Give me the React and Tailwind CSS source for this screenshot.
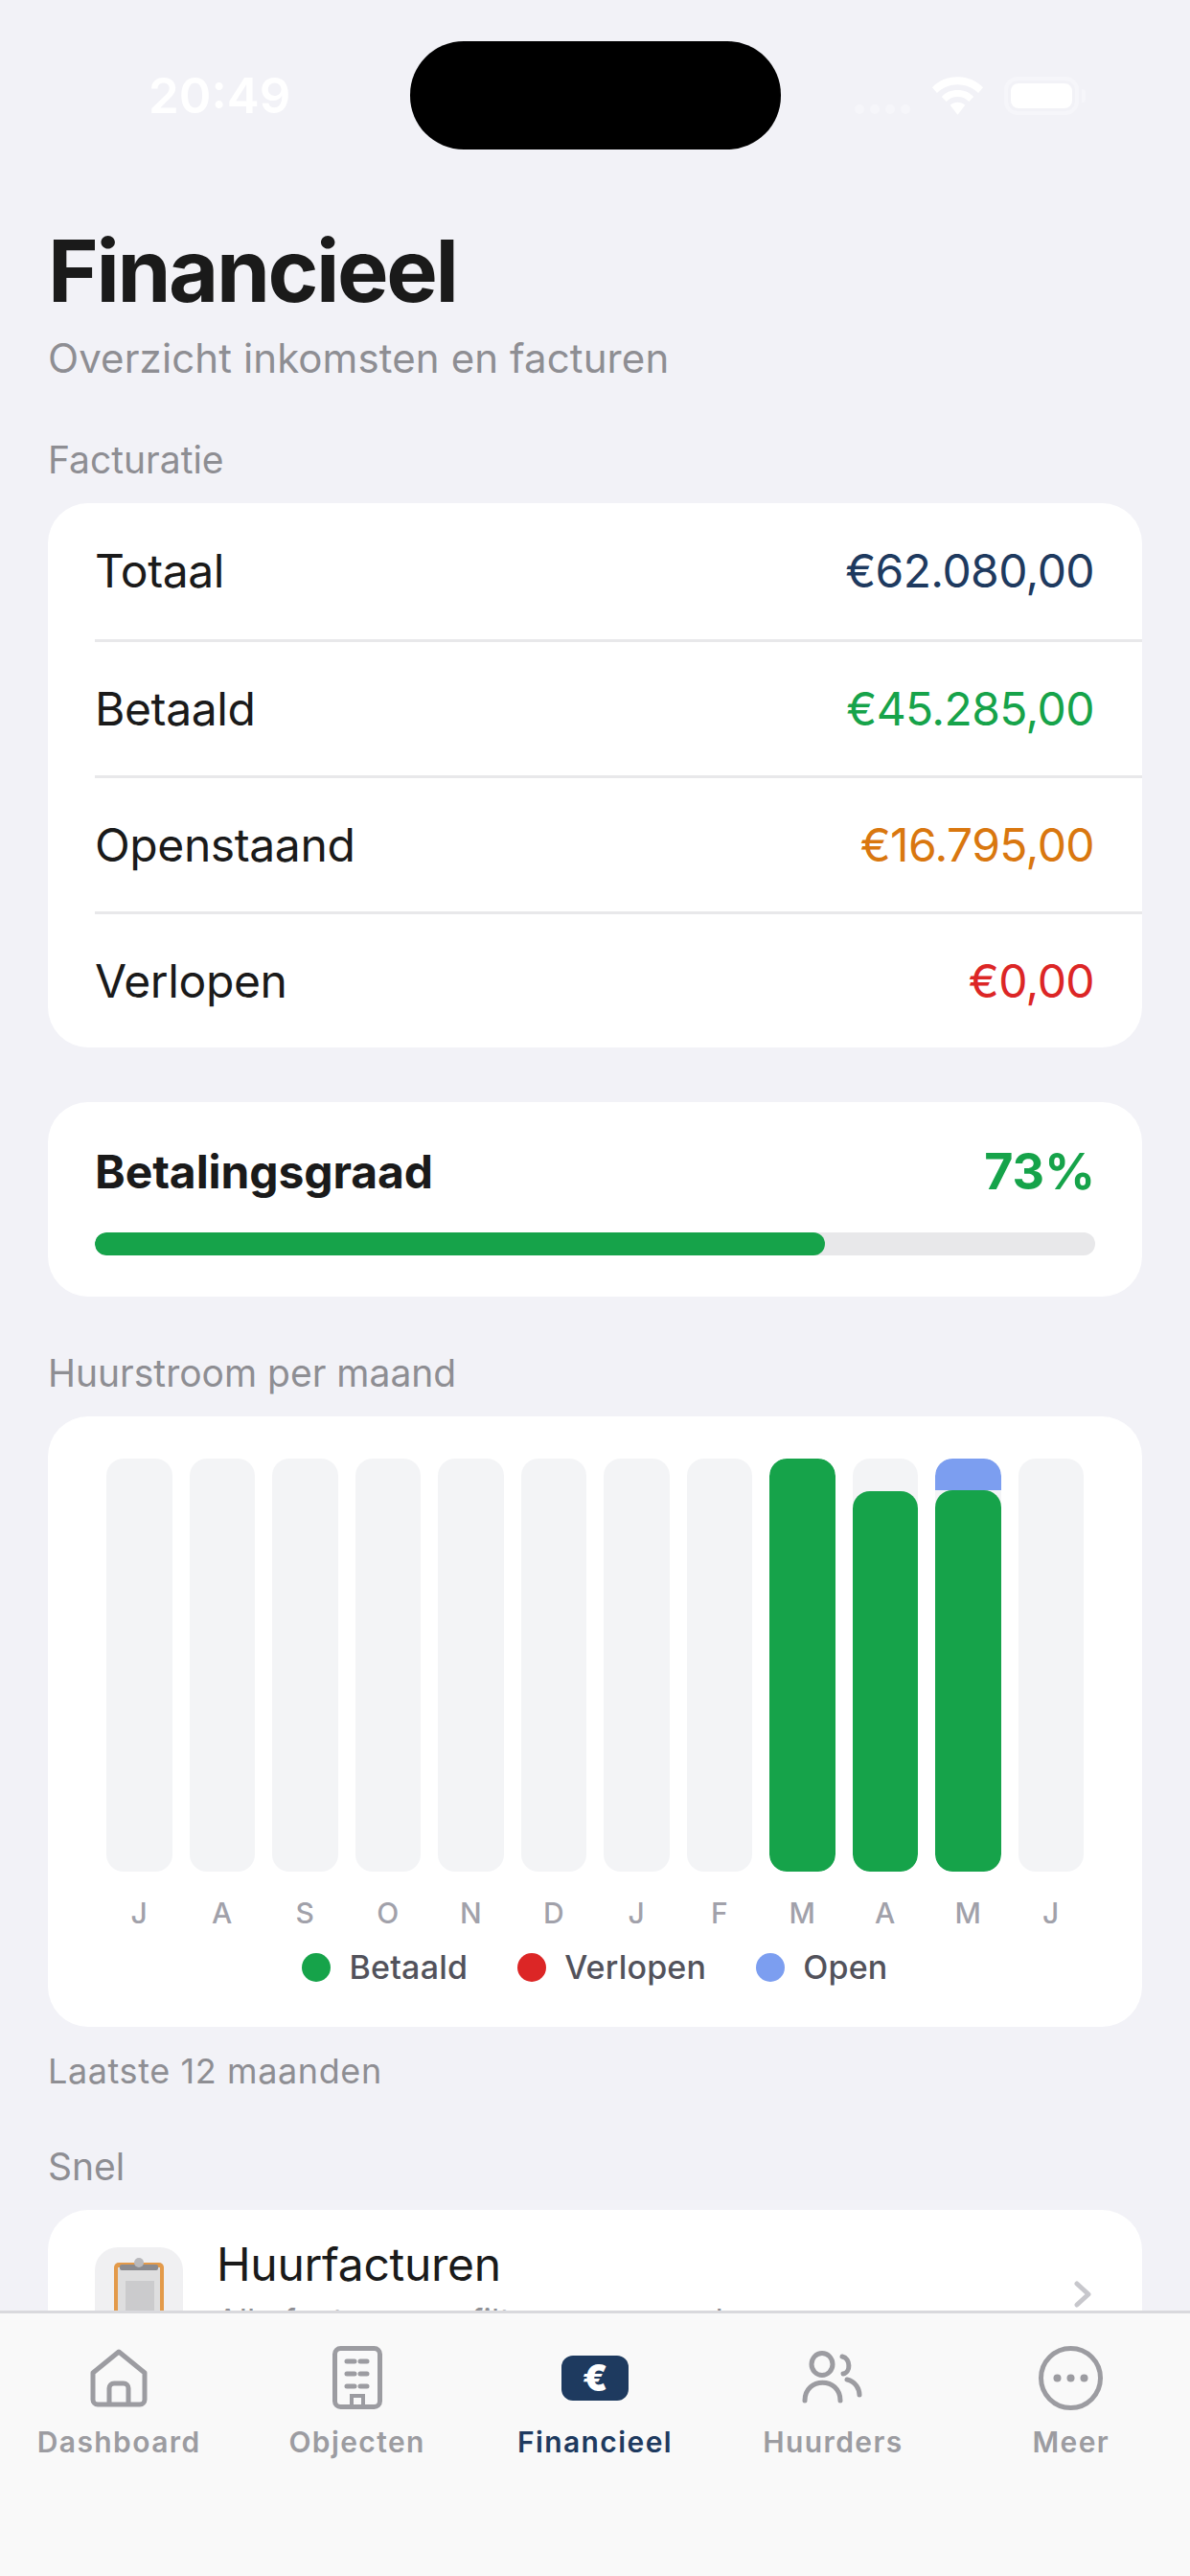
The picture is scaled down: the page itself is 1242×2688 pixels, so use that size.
import React from 'react';

const font = { fontFamily: 'Inter, "Liberation Sans", sans-serif' };

const rows = [
  { label: 'Totaal', value: '€62.080,00', color: 'text-[#1e3a5f]' },
  { label: 'Betaald', value: '€45.285,00', color: 'text-[#16a34a]' },
  { label: 'Openstaand', value: '€16.795,00', color: 'text-[#d9770f]' },
  { label: 'Verlopen', value: '€0,00', color: 'text-[#dc2626]' },
];

const months = [
  { m: 'J' }, { m: 'A' }, { m: 'S' }, { m: 'O' }, { m: 'N' }, { m: 'D' },
  { m: 'J' }, { m: 'F' },
  { m: 'M', paid: 431 },
  { m: 'A', paid: 397 },
  { m: 'M', paid: 398, open: 33 },
  { m: 'J' },
];

const legend = [
  { label: 'Betaald', color: 'bg-[#16a34a]' },
  { label: 'Verlopen', color: 'bg-[#dc2626]' },
  { label: 'Open', color: 'bg-[#7c9ef0]' },
];

const HomeIcon = () => (
  <svg width="60" height="61" viewBox="0 0 60 61" fill="none" stroke="#9c9ca1" strokeWidth="5" strokeLinejoin="round">
    <path d="M30 3 L57 25 V53 a5 5 0 0 1 -5 5 H8 a5 5 0 0 1 -5 -5 V25 Z" />
    <path d="M20 58 V41 a5 5 0 0 1 5 -5 H35 a5 5 0 0 1 5 5 V58" />
  </svg>
);

const BuildingIcon = () => (
  <svg width="52" height="66" viewBox="0 0 52 66" fill="none" stroke="#9c9ca1" strokeWidth="5" strokeLinecap="round">
    <rect x="2.5" y="2.5" width="47" height="61" rx="6" />
    <path d="M15 16 H23 M29 16 H36 M15 29 H23 M29 29 H36 M15 42 H23 M29 42 H36" />
    <path d="M20 63 V52 H32 V63" strokeWidth="4" strokeLinecap="butt" />
  </svg>
);

const EuroIcon = () => (
  <div className="w-[70px] h-[47px] rounded-[12px] bg-[#1e3a5f] flex items-center justify-center">
    <span className="text-white text-[38px] leading-none font-black">€</span>
  </div>
);

const PeopleIcon = () => (
  <svg width="64" height="56" viewBox="0 0 64 56" fill="none" stroke="#9c9ca1" strokeWidth="5" strokeLinecap="round">
    <ellipse cx="21" cy="14" rx="11" ry="11.5" />
    <path d="M3 52 C3 27 40 27 40 52" />
    <path d="M42 6 C51 8 51 23 43 24" />
    <path d="M47 30 C56 32 60 40 60 46" />
  </svg>
);

const MoreIcon = () => (
  <svg width="67" height="67" viewBox="0 0 67 67">
    <circle cx="33.5" cy="33.5" r="31" fill="none" stroke="#9c9ca1" strokeWidth="5" />
    <circle cx="19.5" cy="33.5" r="4" fill="#9c9ca1" />
    <circle cx="33.5" cy="33.5" r="4" fill="#9c9ca1" />
    <circle cx="47.5" cy="33.5" r="4" fill="#9c9ca1" />
  </svg>
);

const tabs = [
  { label: 'Dashboard', icon: <HomeIcon /> },
  { label: 'Objecten', icon: <BuildingIcon /> },
  { label: 'Financieel', icon: <EuroIcon />, active: true },
  { label: 'Huurders', icon: <PeopleIcon /> },
  { label: 'Meer', icon: <MoreIcon /> },
];

const StatusBar = () => (
  <div className="absolute top-0 left-0 right-0 h-[160px]">
    <span className="absolute left-[155px] top-[72px] text-white text-[51px] leading-[56px] font-semibold">20:49</span>
    <div className="absolute left-[428px] top-[43px] w-[387px] h-[113px] rounded-[56px] bg-black" />
    <div className="absolute left-[892px] top-[109px] flex gap-[6px]">
      <div className="w-[10px] h-[10px] rounded-full bg-[#f6f6fa]" />
      <div className="w-[10px] h-[10px] rounded-full bg-[#f6f6fa]" />
      <div className="w-[10px] h-[10px] rounded-full bg-[#f6f6fa]" />
      <div className="w-[10px] h-[10px] rounded-full bg-[#f6f6fa]" />
    </div>
    <svg className="absolute left-[973px] top-[80px]" width="53" height="40" viewBox="0 0 54 40" fill="white">
      <path d="M27 0 C38 0 47 4 54 11 L49 17 C43 11 35 8 27 8 C19 8 11 11 5 17 L0 11 C7 4 16 0 27 0 Z" />
      <path d="M27 14 C34 14 39 16 44 21 L39 26 C36 23 32 21 27 21 C22 21 18 23 15 26 L10 21 C15 16 20 14 27 14 Z" />
      <path d="M27 27 C30 27 33 28 35 30 L27 40 L19 30 C21 28 24 27 27 27 Z" />
    </svg>
    <div className="absolute left-[1048px] top-[80px] w-[78px] h-[40px] rounded-[14px] border-[4px] border-[#f6f6fa] p-[3px]">
      <div className="w-full h-full rounded-[8px] bg-white" />
    </div>
    <div className="absolute left-[1129px] top-[93px] w-[4px] h-[14px] rounded-r-full bg-[#f6f6fa]" />
  </div>
);

const ClipboardIcon = () => (
  <svg width="54" height="70" viewBox="0 0 54 70">
    <rect x="1" y="5" width="52" height="65" rx="5" fill="#e39a4a" />
    <rect x="5" y="10" width="44" height="60" fill="#dededf" />
    <rect x="13" y="24" width="30" height="36" fill="#cbcbcd" />
    <rect x="7" y="7" width="40" height="6" rx="2" fill="#8b8b8f" />
    <circle cx="27" cy="5" r="5" fill="#b9b9bc" />
  </svg>
);

export default function App() {
  return (
    <div style={font} className="relative w-[1242px] h-[2688px] overflow-hidden bg-[#f2f2f7] flex flex-col">
      <div className="flex-1 overflow-hidden px-[50px] pt-[232px]">
        <h1 className="text-[90px] leading-[102px] font-bold tracking-[-2.4px] text-[#1a1a1a]">Financieel</h1>
        <p className="mt-[14px] text-[42px] leading-[52px] tracking-[0.1px] text-[#8e8e93]">Overzicht inkomsten en facturen</p>

        <div className="mt-[56px] text-[39px] leading-[48px] text-[#8e8e93]">Facturatie</div>
        <div className="mt-[21px] bg-white rounded-[42px] overflow-hidden">
          {rows.map((r, i) => (
            <div key={r.label} className={`ml-[49px] h-[142px] flex items-center justify-between pr-[50px] ${i > 0 ? 'border-t-[3px] border-[#e8e8ea]' : ''}`}>
              <span className="text-[48px] tracking-[-0.4px] text-[#1a1a1a]">{r.label}</span>
              <span className={`text-[48px] tracking-[-0.6px] ${r.color}`}>{r.value}</span>
            </div>
          ))}
        </div>

        <div className="mt-[57px] bg-white rounded-[42px] px-[49px] pt-[42px] h-[203px]">
          <div className="flex items-center justify-between h-[62px]">
            <span className="text-[48px] font-bold tracking-[-0.1px] text-[#1a1a1a]">Betalingsgraad</span>
            <span className="text-[52px] font-bold text-[#16a34a]">73%</span>
          </div>
          <div className="mt-[32px] h-[24px] rounded-full bg-[#e8e8ea] overflow-hidden">
            <div className="h-full w-[73%] rounded-full bg-[#16a34a]" />
          </div>
        </div>

        <div className="mt-[56px] text-[39px] leading-[48px] text-[#8e8e93]">Huurstroom per maand</div>
        <div className="mt-[21px] bg-white rounded-[42px] px-[61px] pt-[44px] h-[637px]">
          <div className="flex gap-[18px]">
            {months.map((b, i) => (
              <div key={i} className="flex-1 flex flex-col items-center">
                <div className="relative w-full h-[431px] rounded-[18px] bg-[#f3f4f6] overflow-hidden flex flex-col justify-end">
                  {b.open && <div className="w-full rounded-t-[18px] bg-[#7c9ef0]" style={{ height: b.open }} />}
                  {b.paid && <div className="w-full rounded-[18px] bg-[#16a34a]" style={{ height: b.paid }} />}
                </div>
                <span className="mt-[25px] text-[30px] leading-[36px] font-medium text-[#a1a1aa]">{b.m}</span>
              </div>
            ))}
          </div>
          <div className="mt-[17px] flex justify-center gap-[52px]">
            {legend.map(l => (
              <div key={l.label} className="flex items-center gap-[19px]">
                <div className={`w-[30px] h-[30px] rounded-full ${l.color}`} />
                <span className="text-[34px] leading-[44px] tracking-[0.2px] font-medium text-[#52525b]">{l.label}</span>
              </div>
            ))}
          </div>
        </div>

        <div className="mt-[22px] text-[36px] leading-[48px] tracking-[0.6px] text-[#8e8e93]">Laatste 12 maanden</div>

        <div className="mt-[52px] text-[39px] leading-[48px] text-[#8e8e93]">Snel</div>
        <div className="mt-[21px] bg-white rounded-[42px] pl-[49px] pr-[52px] pt-[39px] pb-[40px] flex items-start">
          <div className="w-[92px] h-[92px] rounded-[24px] bg-[#f0f0f2] flex items-center justify-center shrink-0">
            <ClipboardIcon />
          </div>
          <div className="ml-[35px] flex-1 -mt-[11px]">
            <div className="text-[48px] leading-[58px] tracking-[-0.3px] text-[#1a1a1a]">Huurfacturen</div>
            <div className="mt-[8px] text-[34px] leading-[44px] tracking-[0.2px] text-[#8e8e93]">Alle facturen en filters op maand</div>
          </div>
          <svg className="mt-[35px]" width="20" height="28" viewBox="0 0 20 28" fill="none" stroke="#c7c7cc" strokeWidth="5" strokeLinecap="round" strokeLinejoin="round">
            <path d="M4 3 L16 14 L4 25" />
          </svg>
        </div>
      </div>

      <nav className="h-[277px] shrink-0 bg-[#f9f9f9] border-t-[3px] border-[#d9d9dd] grid grid-cols-5 relative">
        {tabs.map(t => (
          <div key={t.label} className="flex flex-col items-center pt-[32px]">
            <div className="h-[70px] flex items-center justify-center">{t.icon}</div>
            <span className={`mt-[14px] text-[30px] leading-[36px] tracking-[1.4px] font-semibold ${t.active ? 'text-[#1e3a5f]' : 'text-[#9c9ca1]'}`}>{t.label}</span>
          </div>
        ))}
      </nav>

      <StatusBar />
    </div>
  );
}
